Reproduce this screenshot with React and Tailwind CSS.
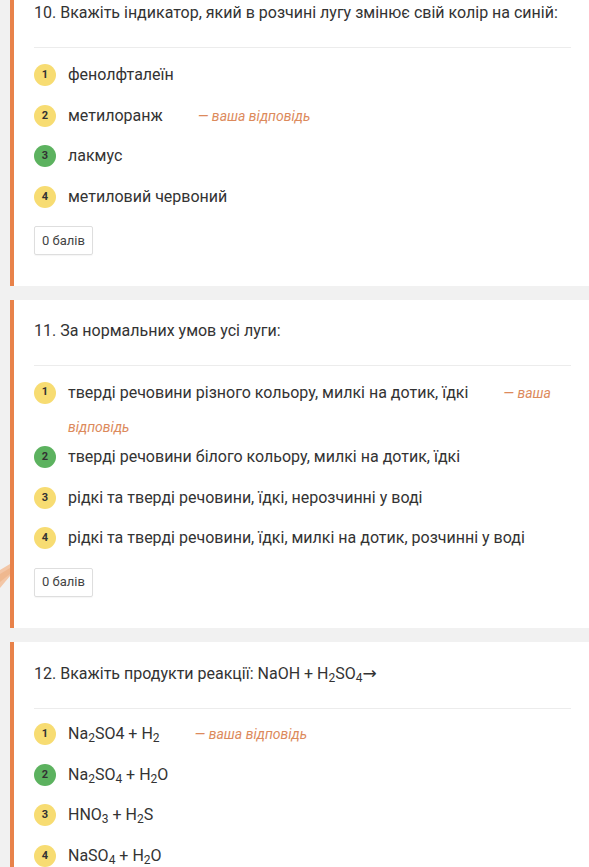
import React from "react";

const font = { fontFamily: "Roboto, 'Noto Sans', sans-serif" };

function Badge({ n, ok }) {
  return (
    <span
      className={
        "flex h-[22px] w-[22px] shrink-0 items-center justify-center rounded-full text-[11px] font-bold text-[#333] " +
        (ok ? "bg-[#5cb25f]" : "bg-[#f7dc72]")
      }
    >
      {n}
    </span>
  );
}

function Answer() {
  return (
    <span className="ml-[35px] text-[14px] italic text-[#dc8a5c]">— ваша відповідь</span>
  );
}

function Row({ n, ok, children, mine }) {
  return (
    <div className="flex h-[40.5px] items-center gap-[12px]">
      <Badge n={n} ok={ok} />
      <div className="text-[16px] leading-6 text-[#333]">
        {children}
        {mine && <Answer />}
      </div>
    </div>
  );
}

function Card({ title, children, first, listTop }) {
  return (
    <div
      className={
        "border-l-4 border-[#e8824a] bg-white pl-5 pr-[18px] pt-[19px] pb-[31px] " +
        (first ? "-mt-[18px]" : "")
      }
    >
      <div className="text-[16px] leading-6 text-[#333]">{title}</div>
      <div className="mt-[22px] h-px bg-[#ececec]" />
      <div className={listTop || "mt-[7px]"}>{children}</div>
      <div className="mt-[9px] inline-flex h-[29px] items-center rounded-[2px] border border-[#dedede] px-[7px] text-[13px] text-[#444] shadow-[0_1px_1px_rgba(0,0,0,0.04)]">
        0 балів
      </div>
    </div>
  );
}

export default function App() {
  return (
    <div className="relative h-[867px] overflow-hidden bg-[#f1f1f1] pl-[10px]" style={font}>
      <div className="flex flex-col gap-[14px]">
        <Card first title="10. Вкажіть індикатор, який в розчині лугу змінює свій колір на синій:">
          <Row n="1">фенолфталеїн</Row>
          <Row n="2" mine>метилоранж</Row>
          <Row n="3" ok>лакмус</Row>
          <Row n="4">метиловий червоний</Row>
        </Card>
        <Card title="11. За нормальних умов усі луги:">
          <div className="mt-[10px] -mb-[7px] flex items-start gap-[12px]">
            <span className="mt-[5.5px]">
              <Badge n="1" />
            </span>
            <div className="text-[16px] leading-[33px] text-[#333]">
              тверді речовини різного кольору, милкі на дотик, їдкі
              <Answer />
            </div>
          </div>
          <Row n="2" ok>тверді речовини білого кольору, милкі на дотик, їдкі</Row>
          <Row n="3">рідкі та тверді речовини, їдкі, нерозчинні у воді</Row>
          <Row n="4">рідкі та тверді речовини, їдкі, милкі на дотик, розчинні у воді</Row>
        </Card>
        <Card
          listTop="mt-[5.5px]"
          title={
            <>
              12. Вкажіть продукти реакції: NaOH + H<sub>2</sub>SO<sub>4</sub>
              <span className="text-[17px]" style={{ fontFamily: "'DejaVu Sans', sans-serif" }}>→</span>
            </>
          }
        >
          <Row n="1" mine>
            Na<sub>2</sub>SO4 + H<sub>2</sub>
          </Row>
          <Row n="2" ok>
            Na<sub>2</sub>SO<sub>4</sub> + H<sub>2</sub>O
          </Row>
          <Row n="3">
            HNO<sub>3</sub> + H<sub>2</sub>S
          </Row>
          <Row n="4">
            NaSO<sub>4</sub> + H<sub>2</sub>O
          </Row>
        </Card>
      </div>
      <svg className="absolute left-0 top-[562px]" width="10" height="30" viewBox="0 0 10 30">
        <polygon points="0,8 10,2 10,14 0,26" fill="#f3c6a6" />
        <polygon points="0,12 10,6 10,12 0,20" fill="#efb88f" />
      </svg>
    </div>
  );
}
